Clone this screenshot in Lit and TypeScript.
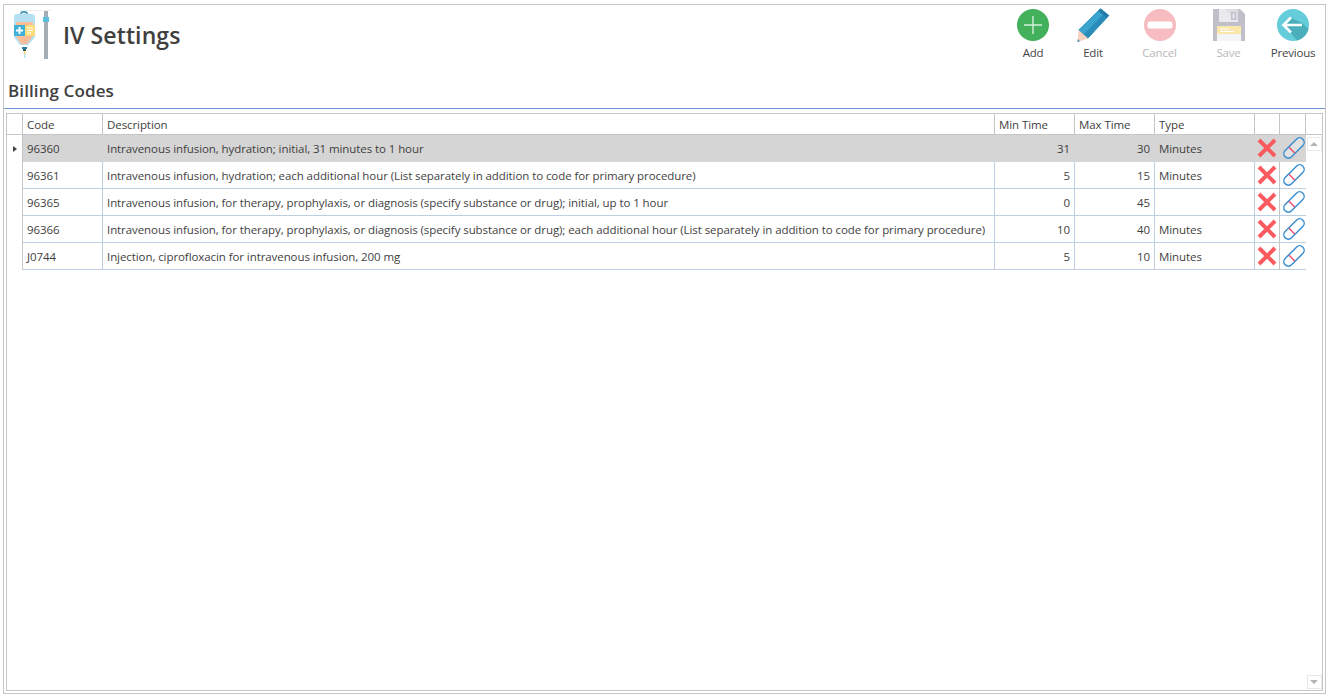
import { LitElement, html, css, svg } from "lit";
import { customElement } from "lit/decorators.js";

const rows = [
  ["96360", "Intravenous infusion, hydration; initial, 31 minutes to 1 hour", "31", "30", "Minutes"],
  ["96361", "Intravenous infusion, hydration; each additional hour (List separately in addition to code for primary procedure)", "5", "15", "Minutes"],
  ["96365", "Intravenous infusion, for therapy, prophylaxis, or diagnosis (specify substance or drug); initial, up to 1 hour", "0", "45", ""],
  ["96366", "Intravenous infusion, for therapy, prophylaxis, or diagnosis (specify substance or drug); each additional hour (List separately in addition to code for primary procedure)", "10", "40", "Minutes"],
  ["J0744", "Injection, ciprofloxacin for intravenous infusion, 200 mg", "5", "10", "Minutes"],
];

const ivIcon = svg`<svg width="40" height="50" viewBox="13 10 40 50">
  <rect x="19" y="10" width="33" height="1" fill="#eceef0"/>
  <rect x="44" y="11" width="4" height="48" fill="#a4acb4"/>
  <rect x="43" y="17" width="6" height="5" fill="#5cc0dc"/>
  <path d="M21 15 v-1 q0-2 2-2 h2 q2 0 2 2 v1" fill="none" stroke="#4f9fc2" stroke-width="1.800"/>
  <path d="M14 17 q0-3 3-3 h15 q3 0 3 3 v20 l-7 8 h-8 l-6-8z" fill="#b5e0f2"/>
  <path d="M16 22 h17 v14 l-6 8 h-6 l-5-8z" fill="#fbbd97"/>
  <rect x="14" y="25" width="11" height="11" fill="#3fb1d9"/>
  <rect x="25" y="25" width="10" height="11" fill="#fddc7c"/>
  <path d="M19.500 27 v7 M16 30.500 h7" stroke="#fff" stroke-width="2"/>
  <path d="M27 28 h6 M27 30.500 h6 M27 33 h4" stroke="#fff" stroke-width="1"/>
  <rect x="22" y="47" width="5" height="2" fill="#2f7fa5"/>
  <rect x="23" y="49" width="3" height="2" fill="#33566c"/>
  <rect x="24" y="51" width="1.500" height="3" fill="#fbd66a"/>
  <rect x="24" y="54" width="1.500" height="4" fill="#b5e0f2"/>
</svg>`;

const addIcon = svg`<svg width="32" height="32" viewBox="0 0 32 32">
  <circle cx="16" cy="16" r="16" fill="#43b05c"/>
  <path d="M16 7 v18 M7 16 h18" stroke="#d5f0dc" stroke-width="1.400"/>
</svg>`;

const editIcon = svg`<svg width="34" height="34" viewBox="0 0 34 34">
  <path d="M2.800 22 L24.500 .8 L32.800 7.500 L11.800 30.300 Z" fill="#2a8db9" stroke="#2a8db9" stroke-width="1" stroke-linejoin="round"/>
  <path d="M2.800 22 L24.500 .8 L29 4.500 L7.500 26.500 Z" fill="#3ba4cf"/>
  <path d="M24.500 .8 L32.800 7.500 L30.800 9.800 L22.300 3 Z" fill="#237ba5"/>
  <path d="M2.500 22 L12 30.500 L1.500 34 Z" fill="#f8d3c0"/>
  <path d="M1.900 31 L3.800 33.200 L1.500 34 Z" fill="#2f7fa5"/>
</svg>`;

const cancelIcon = svg`<svg width="32" height="32" viewBox="0 0 32 32">
  <circle cx="16" cy="16" r="16" fill="#f7bcbf"/>
  <rect x="3.500" y="12.500" width="25" height="7" rx="2.500" fill="#fff"/>
</svg>`;

const saveIcon = svg`<svg width="32" height="32" viewBox="0 0 32 32">
  <path d="M0 0 H27 L32 5 V32 H0 Z" fill="#bfc0ca"/>
  <path d="M6 0 H25 V13 H6 Z" fill="#e9e9ee"/>
  <path d="M12 0 L22 11 H25 V0Z" fill="#d5d6dc" opacity=".6"/>
  <rect x="18" y="3" width="5" height="8" fill="#bfc0ca"/>
  <rect x="19.500" y="4.500" width="2" height="5" fill="#e9e9ee"/>
  <rect x="4" y="17" width="24" height="15" fill="#f4f5f7"/>
  <rect x="4" y="17" width="24" height="8" fill="#fbe7ab"/>
  <path d="M7 20 h9 M7 22.500 h14" stroke="#fff" stroke-width="1"/>
</svg>`;

const prevIcon = svg`<svg width="32" height="32" viewBox="0 0 32 32">
  <circle cx="16" cy="16" r="16" fill="#65cdd9"/>
  <path d="M7 16 L14 9 L25 14 L31.500 20 A16 16 0 0 1 20 31.500 Z" fill="#4aaebb"/>
  <path d="M14 8.500 L6.500 16 L14 23.500 M7 16 H25" fill="none" stroke="#fff" stroke-width="2.600"/>
</svg>`;

const delIcon = svg`<svg width="20" height="20" viewBox="0 0 20 20">
  <path d="M2 2 L18 18 M18 2 L2 18" stroke="#fb5a5e" stroke-width="4"/>
</svg>`;

const pillIcon = svg`<svg width="22" height="22" viewBox="0 0 22 22">
  <g transform="rotate(-45 11 11)">
    <rect x="-1.500" y="6.500" width="25" height="9" rx="4.500" fill="#fff" fill-opacity=".3" stroke="#3b8fd0" stroke-width="1.500"/>
    <path d="M8 7 V15" stroke="#f2446b" stroke-width="1.300"/>
  </g>
</svg>`;

@customElement("app-root")
export class AppRoot extends LitElement {
  static styles = css`
    :host {
      display: block;
      height: 697px;
      background: #fff;
      font-family: "Open Sans", "Noto Sans", sans-serif;
      color: #3f3f3f;
      box-sizing: border-box;
      padding: 4px 1px 3px 3px;
    }
    .frame {
      height: 100%;
      box-sizing: border-box;
      border: 1px solid #c6c6c6;
      display: flex;
      flex-direction: column;
    }
    .top {
      height: 66px;
      flex: none;
      display: flex;
      align-items: flex-start;
    }
    .logo {
      margin: 5px 0 0 9px;
      width: 40px;
      height: 50px;
    }
    h1 {
      margin: 13px 0 0 10px;
      font-size: 23px;
      line-height: 34px;
      font-weight: 600;
      color: #404040;
      letter-spacing: 0.1px;
    }
    .tools {
      margin-left: auto;
      display: flex;
    }
    .tool {
      display: flex;
      flex-direction: column;
      align-items: center;
      font-size: 11.5px;
      color: #444;
      padding-top: 4px;
    }
    .tool .ic {
      height: 32px;
      display: flex;
      align-items: center;
    }
    .tool .lb {
      margin-top: 4px;
      line-height: 16px;
      letter-spacing: -0.2px;
    }
    .tool.off .lb { color: #b9b9b9; }
    .t-add { width: 60px; }
    .t-edit { width: 60px; }
    .t-cancel { width: 73px; }
    .t-save { width: 65px; }
    .t-prev { width: 64px; }
    h2 {
      margin: 0;
      height: 38px;
      flex: none;
      box-sizing: border-box;
      padding: 8px 0 0 4px;
      font-size: 17px;
      line-height: 24px;
      font-weight: 600;
      color: #404040;
      letter-spacing: 0.1px;
      border-bottom: 1px solid #6f97cf;
    }
    .grid {
      flex: 1;
      margin: 4px 2px 2px 2px;
      border: 1px solid #c6c6c6;
      display: flex;
      flex-direction: column;
      min-height: 0;
      font-size: 11.5px;
      letter-spacing: -0.08px;
    }
    .row {
      display: grid;
      grid-template-columns: 16px 80px 892px 80px 80px 100px 25px 26px;
      flex: none;
    }
    .row > div {
      box-sizing: border-box;
      padding: 0 4px;
      white-space: nowrap;
      overflow: hidden;
      display: flex;
      align-items: center;
    }
    .head {
      height: 21px;
      grid-template-columns: 16px 80px 892px 80px 80px 100px 25px 26px 1fr;
      border-bottom: 1px solid #c6c6c6;
      box-sizing: border-box;
    }
    .head > div { border-right: 1px solid #c6c6c6; }
    .head > div:last-child { border-right: 0; }
    .body {
      flex: 1;
      display: grid;
      grid-template-columns: 1fr 17px;
      min-height: 0;
    }
    .data .row {
      height: 27px;
    }
    .data .row > div {
      border-right: 1px solid #bcd0e2;
      border-bottom: 1px solid #bcd0e2;
    }
    .data .row > .ind { border-right: 1px solid #c6c6c6; border-bottom: 0; padding: 0; justify-content: center; }
    .data .row > .act { padding: 0; justify-content: center; overflow: visible; border-right-color: #c6c6c6; }
    .data .row > .pill { padding-left: 1px; border-right: 0; }
    .data .row > .num { justify-content: flex-end; padding-right: 4px; }
    .data .row.sel > div:not(.ind) {
      background: #d5d5d5;
      border-right-color: #d5d5d5;
      border-bottom-color: #d5d5d5;
    }
    .data .row.sel > .act { border-right-color: #c6c6c6; }
    .arrow {
      width: 0;
      height: 0;
      border-left: 4px solid #444;
      border-top: 3.500px solid transparent;
      border-bottom: 3.500px solid transparent;
    }
    .scroll {
      display: flex;
      flex-direction: column;
      justify-content: space-between;
      align-items: center;
      padding: 2px 1px 1px 0;
    }
    .sb {
      width: 15px;
      height: 14px;
      box-sizing: border-box;
      border: 1px solid #e8e8e8;
      display: flex;
      align-items: center;
      justify-content: center;
    }
    .up { border-bottom: 4px solid #b4b4b4; border-left: 4px solid transparent; border-right: 4px solid transparent; }
    .down { border-top: 4px solid #b4b4b4; border-left: 4px solid transparent; border-right: 4px solid transparent; }
  `;

  render() {
    return html`<div class="frame">
      <div class="top">
        <div class="logo">${ivIcon}</div>
        <h1>IV Settings</h1>
        <div class="tools">
          <div class="tool t-add"><div class="ic">${addIcon}</div><div class="lb">Add</div></div>
          <div class="tool t-edit"><div class="ic">${editIcon}</div><div class="lb">Edit</div></div>
          <div class="tool t-cancel off"><div class="ic">${cancelIcon}</div><div class="lb">Cancel</div></div>
          <div class="tool t-save off"><div class="ic">${saveIcon}</div><div class="lb">Save</div></div>
          <div class="tool t-prev"><div class="ic">${prevIcon}</div><div class="lb">Previous</div></div>
        </div>
      </div>
      <h2>Billing Codes</h2>
      <div class="grid">
        <div class="row head">
          <div></div><div>Code</div><div>Description</div><div>Min Time</div><div>Max Time</div><div>Type</div><div></div><div></div><div></div>
        </div>
        <div class="body">
          <div class="data">
            ${rows.map(
              (r, i) => html`<div class="row ${i === 0 ? "sel" : ""}">
                <div class="ind">${i === 0 ? html`<span class="arrow"></span>` : ""}</div>
                <div>${r[0]}</div>
                <div>${r[1]}</div>
                <div class="num">${r[2]}</div>
                <div class="num">${r[3]}</div>
                <div>${r[4]}</div>
                <div class="act del">${delIcon}</div>
                <div class="act pill">${pillIcon}</div>
              </div>`
            )}
          </div>
          <div class="scroll">
            <div class="sb"><span class="up"></span></div>
            <div class="sb"><span class="down"></span></div>
          </div>
        </div>
      </div>
    </div>`;
  }
}
